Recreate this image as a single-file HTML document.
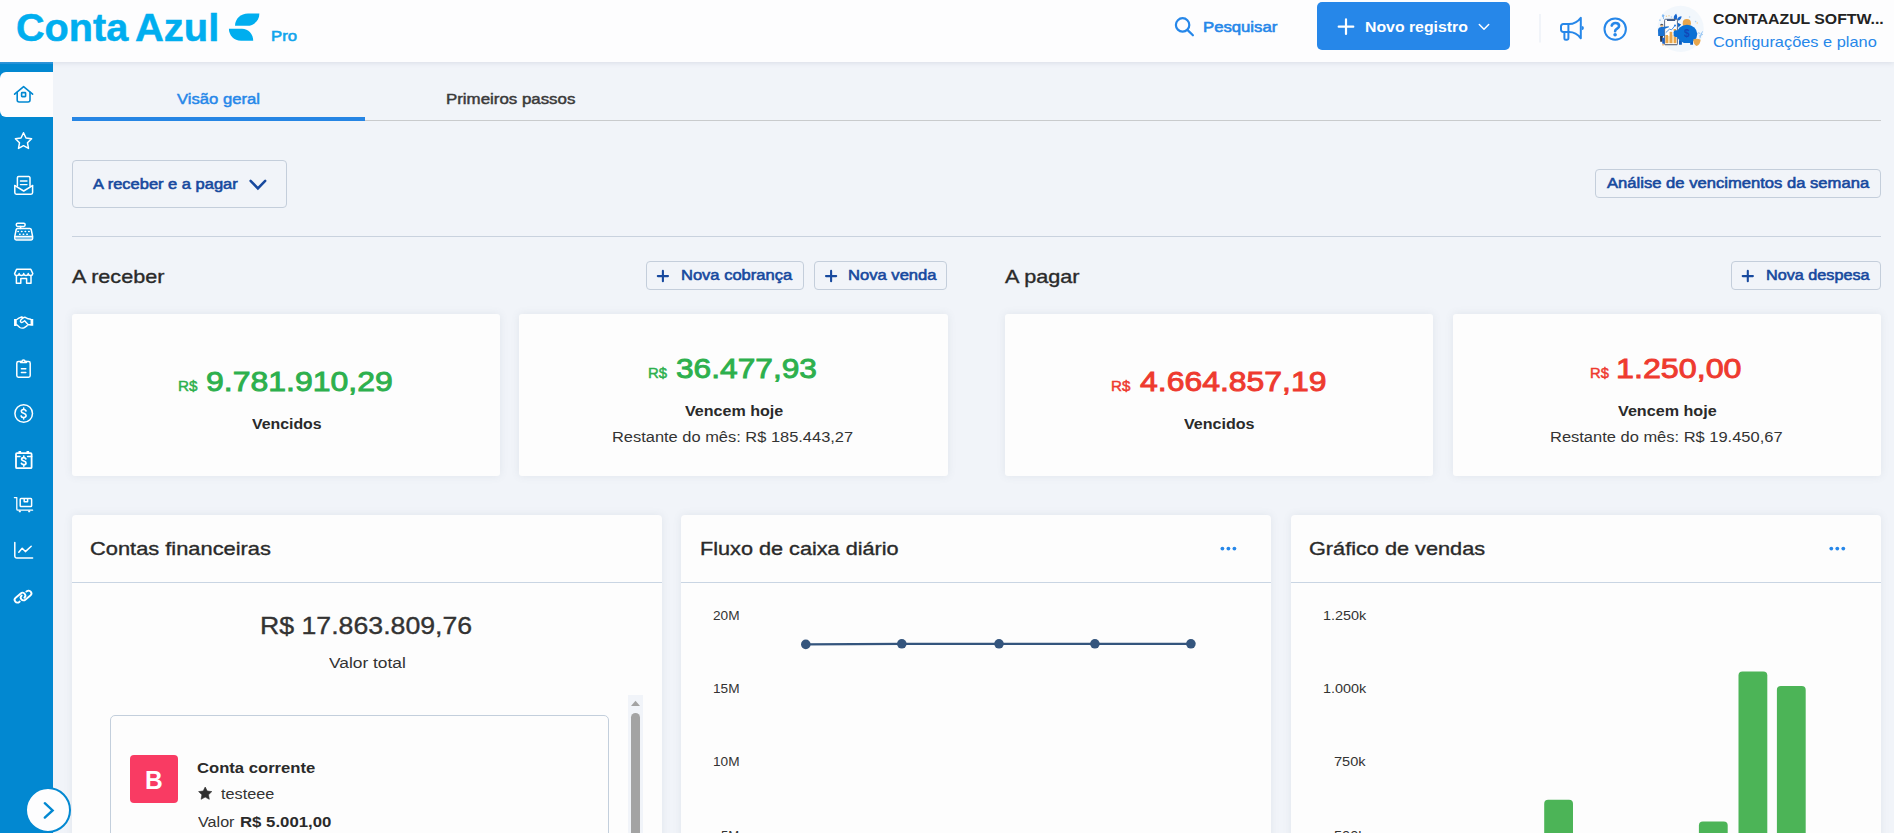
<!DOCTYPE html>
<html lang="pt-BR">
<head>
<meta charset="utf-8">
<title>Conta Azul Pro</title>
<style>
*{box-sizing:border-box;margin:0;padding:0}
html,body{width:1894px;height:833px;overflow:hidden}
body{font-family:"Liberation Sans",sans-serif;background:#f1f4f9;color:#2f2f2f;position:relative}
.t{position:absolute;white-space:nowrap;line-height:1;transform-origin:0 0}
svg{position:absolute;overflow:visible}
#hdr{position:absolute;left:0;top:0;width:1894px;height:62px;background:#fdfdfe;box-shadow:0 1px 5px rgba(60,80,110,.13);z-index:5}
#side{position:absolute;left:0;top:62px;width:53px;height:771px;background:linear-gradient(#2f94d9 0,#2a92d8 1.4px,#0288d1 2.4px);z-index:6}
#side .act{position:absolute;left:0;top:10px;width:53px;height:45px;background:#fdfdfe;border-radius:6px 0 0 6px}
#main{position:absolute;left:0;top:0;width:1894px;height:833px;z-index:1}
.bx{position:absolute}
.btn{position:absolute;border:1px solid #c4cedb;border-radius:4px}
.card{position:absolute;background:#fdfdfd;border-radius:3px;box-shadow:0 0 9px rgba(90,105,130,.11)}
.panel{position:absolute;background:#fdfdfd;border-radius:4px 4px 0 0;box-shadow:0 0 9px rgba(90,105,130,.11);top:515px;height:340px}
.panel i{position:absolute;left:0;right:0;top:67px;height:1px;background:#c9d5e3}
</style>
</head>
<body>
<div id="hdr">
<svg width="1894" height="62" viewBox="0 0 1894 62" style="left:0;top:0">
  <!-- logo mark -->
  <path d="M235,25.8 C235,19 240.8,13.6 248,13.6 L259.4,13.6 C259.4,20.6 254,25.8 247,25.8 Z" fill="#00aeef"/>
  <path d="M228.9,28.7 L242,28.7 C248.4,28.7 253.2,34 253.2,40.7 L241,40.7 C234,40.7 228.9,35.2 228.9,28.7 Z" fill="#00aeef"/>
  <!-- search icon -->
  <circle cx="1182.6" cy="24.9" r="6.7" fill="none" stroke="#2687e9" stroke-width="2.2"/>
  <path d="M1187.4,29.9 L1192.9,35.3" stroke="#2687e9" stroke-width="2.2" stroke-linecap="round"/>
  <!-- new button -->
  <rect x="1317" y="2" width="193" height="48" rx="5" fill="#2687e9"/>
  <path d="M1346,19.4 V34 M1338.7,26.7 H1353.3" stroke="#fff" stroke-width="2.2" stroke-linecap="round"/>
  <path d="M1479.3,24.5 L1484,29.2 L1488.7,24.5" fill="none" stroke="#fff" stroke-width="1.5" stroke-linecap="round" stroke-linejoin="round"/>
  <!-- divider -->
  <rect x="1539.5" y="14" width="1" height="28.5" fill="#e6ebf3"/>
  <!-- megaphone -->
  <g fill="none" stroke="#2687e9" stroke-width="2" stroke-linecap="round" stroke-linejoin="round">
    <path d="M1569,24.1 H1563.2 a2.2,2.2 0 0 0 -2.2,2.2 V29.7 a2.2,2.2 0 0 0 2.2,2.2 H1569"/>
    <path d="M1568.4,24.1 V31.9"/>
    <path d="M1569,24.1 C1574,24.1 1578,21.6 1580.8,17.9 V38.3 C1578,34.4 1574,31.9 1569,31.9"/>
    <path d="M1564.4,32.4 V38.2 a1.5,1.5 0 0 0 1.5,1.5 h1 a1.5,1.5 0 0 0 1.5,-1.5 V32.4"/>
  </g>
  <path d="M1581.8,26 a2.1,2.1 0 0 1 0,4.2 Z" fill="#2687e9"/>
  <!-- help -->
  <circle cx="1615.2" cy="29.1" r="10.7" fill="none" stroke="#2687e9" stroke-width="2"/>
  <path d="M1611.7,25.6 C1612.2,23.9 1613.7,23 1615.4,23 C1617.6,23 1619.1,24.3 1619.1,26.1 C1619.1,28.7 1615.1,28.7 1615.1,31.3" fill="none" stroke="#2687e9" stroke-width="2.6" stroke-linecap="round"/>
  <circle cx="1615.1" cy="34.8" r="1.8" fill="#2687e9"/>
  <!-- avatar -->
  <circle cx="1680.6" cy="28.9" r="23.2" fill="#f2f7fc"/>
  <g>
    <!-- speckles -->
    <g fill="#a9d0f5"><circle cx="1662.8" cy="15.4" r="1"/><circle cx="1660" cy="20.2" r="0.9"/><circle cx="1689.6" cy="17" r="0.8"/><circle cx="1695.6" cy="21.6" r="0.8"/><circle cx="1671.4" cy="17" r="0.8"/></g>
    <g fill="#f3cf8f"><circle cx="1666.4" cy="16.2" r="0.7"/><circle cx="1669" cy="15.8" r="0.7"/><circle cx="1697.2" cy="23" r="0.7"/></g>
    <path d="M1663,14.4 L1663.6,19 M1662,16.4 L1664.4,15.6" stroke="#5ea5ee" stroke-width="0.7" fill="none"/>
    <!-- leaves -->
    <path d="M1674.2,19.4 C1673,17 1674.6,14.6 1676.2,13.8 C1677.4,15.6 1677.4,17.6 1676.6,19.4 Z" fill="#1767d0"/>
    <path d="M1677,19.8 C1677.4,17.6 1679.4,16.2 1681.6,16.2 C1681.4,18.6 1680,20.2 1678,20.6 Z" fill="#1767d0"/>
    <!-- phone -->
    <rect x="1664.6" y="19.3" width="12.8" height="25.4" rx="0.9" fill="#fff" stroke="#465a7c" stroke-width="0.9"/>
    <rect x="1667" y="19.4" width="8.2" height="1.5" fill="#2f4a78"/>
    <rect x="1664.6" y="44.2" width="12.8" height="0.9" fill="#6b7280"/>
    <rect x="1668" y="35.9" width="1.6" height="7.3" fill="#f8dcaa"/>
    <rect x="1672.3" y="35" width="1.7" height="8.2" fill="#f8dcaa"/>
    <rect x="1665.4" y="35" width="2.6" height="8.2" fill="#e8a64c"/>
    <rect x="1669.6" y="31.8" width="2.7" height="11.4" fill="#e8a64c"/>
    <rect x="1674" y="36.6" width="2.4" height="6.6" fill="#e8a64c"/>
    <rect x="1673.6" y="29" width="2.5" height="2.1" fill="#e8a64c"/>
    <path d="M1665.8,32.6 L1669.4,29.2 L1671.6,29.8 L1674.8,25.8" fill="none" stroke="#2379de" stroke-width="0.8"/>
    <circle cx="1675" cy="25.6" r="1" fill="#2379de"/>
    <!-- person -->
    <path d="M1660,25.4 a1.7,1.7 0 0 1 3.4,0 Z" fill="#4a5568"/>
    <rect x="1660.6" y="25.2" width="2.2" height="1.5" fill="#e9a85c"/>
    <path d="M1658,30 C1658.2,27.6 1659.8,26.8 1661.6,26.9 L1668.8,26.2 L1668.9,27.3 L1664.2,28.9 L1664.6,35.9 L1658.2,35.9 Z" fill="#1a72d2"/>
    <path d="M1660,35.9 L1663,35.9 L1662,41.7 L1660.2,41.7 Z" fill="#2c3445"/>
    <path d="M1661.8,37.8 L1664.6,37.8 L1664.6,43.8 L1662.4,43.8 Z" fill="#1a5fc2"/>
    <rect x="1662.2" y="44.2" width="1.8" height="1.2" fill="#e9a85c"/>
    <!-- coin -->
    <circle cx="1686.8" cy="23.2" r="4.1" fill="#e8a64c"/>
    <!-- pig -->
    <rect x="1679" y="40" width="2.9" height="4.8" rx="0.5" fill="#0b5cc0"/>
    <rect x="1690.2" y="40" width="2.8" height="4.8" rx="0.5" fill="#0b5cc0"/>
    <ellipse cx="1687" cy="33.9" rx="10.3" ry="9.2" fill="#0a70d4"/>
    <rect x="1673.6" y="30.3" width="5" height="6.6" rx="2" fill="#0a70d4"/>
    <path d="M1677.6,22.8 L1681.2,24.6 L1678.4,27.4 Z" fill="#0a66cc"/>
    <!-- shield coin -->
    <path d="M1693.2,39.6 C1695.4,38.6 1698.4,38.6 1700.6,39.8 C1700.4,43.2 1698.8,45.4 1696.6,46 C1694.4,45.2 1693.2,42.8 1693.2,39.6 Z" fill="#e8a64c"/>
    <!-- plant / tail -->
    <path d="M1697.4,33.4 C1698.6,32.4 1699.8,33 1700.4,34 M1699.8,38.4 C1700.4,35.6 1701.4,33.4 1702.6,31.4 M1700.6,35.2 L1702.8,34.4 M1700.2,36.6 L1698.8,35.4" stroke="#7db7f0" stroke-width="0.8" fill="none"/>
  </g>
</svg>
<span class="t" style="left:1683.6px;top:28.2px;font-size:10.5px;font-weight:bold;color:#1247b8;transform:scaleX(0.95)">$</span>

<span class="t" style="left:15.97px;top:9px;font-size:38.5px;color:#00aeef;transform:scaleX(1.0294);font-weight:bold;-webkit-text-stroke:0.5px #00aeef;">Conta</span>
<span class="t" style="left:134.96px;top:9px;font-size:38.5px;color:#00aeef;transform:scaleX(1.0385);font-weight:bold;-webkit-text-stroke:0.5px #00aeef;">Azul</span>
<span class="t" style="left:271.12px;top:29px;font-size:14.2px;color:#12a4ec;transform:scaleX(1.1762);-webkit-text-stroke:0.55px #12a4ec;">Pro</span>
<span class="t" style="left:1202.81px;top:20px;font-size:14px;color:#2687e9;transform:scaleX(1.1934);-webkit-text-stroke:0.55px #2687e9;">Pesquisar</span>
<span class="t" style="left:1364.77px;top:20px;font-size:14px;color:#ffffff;transform:scaleX(1.1300);font-weight:bold;">Novo registro</span>
<span class="t" style="left:1712.75px;top:13px;font-size:13.8px;color:#222222;transform:scaleX(1.1463);font-weight:bold;">CONTAAZUL SOFTW...</span>
<span class="t" style="left:1712.76px;top:35px;font-size:14.4px;color:#2687e9;transform:scaleX(1.1371);">Configurações e plano</span>
</div>
<div id="side">
<div class="act"></div>
<svg width="53" height="833" viewBox="0 0 53 833" style="left:0;top:-62px">
 <!-- home (active) -->
 <g fill="none" stroke="#0288d1" stroke-width="1.6" stroke-linecap="round" stroke-linejoin="round">
  <path d="M14.6,94.2 L23.6,86.6 L32.6,94.2"/>
  <path d="M17.2,92.4 V100 a2,2 0 0 0 2,2 H28 a2,2 0 0 0 2,-2 V92.4"/>
  <rect x="21.6" y="92.6" width="4" height="4" rx="0.6"/>
 </g>
 <g fill="none" stroke="#fff" stroke-width="1.5" stroke-linecap="round" stroke-linejoin="round">
 <!-- star -->
  <path d="M23.5,132.8 L26,138 L31.6,138.8 L27.5,142.8 L28.5,148.4 L23.5,145.7 L18.5,148.4 L19.5,142.8 L15.4,138.8 L21,138 Z"/>
 <!-- mail -->
  <path d="M17.4,186 V177.8 a1.2,1.2 0 0 1 1.2,-1.2 H28.8 a1.2,1.2 0 0 1 1.2,1.2 V186"/>
  <path d="M20.4,181 H27 M20.4,184.6 H27" stroke-width="1.3"/>
  <path d="M14.8,185.4 V192.6 a1.6,1.6 0 0 0 1.6,1.6 H31 a1.6,1.6 0 0 0 1.6,-1.6 V185.4"/>
  <path d="M14.9,185.6 L23.7,191 L32.5,185.6"/>
 <!-- cash register -->
  <rect x="16.3" y="223.2" width="8.8" height="3.2" rx="1.3"/>
  <path d="M20.6,226.6 V228.6"/>
  <path d="M17.6,228.4 H29.8 a1.4,1.4 0 0 1 1.4,1.1 L32.6,236.4 V238.6 a1.4,1.4 0 0 1 -1.4,1.4 H16.2 a1.4,1.4 0 0 1 -1.4,-1.4 V236.4 L16.2,229.5 a1.4,1.4 0 0 1 1.4,-1.1 Z"/>
  <rect x="15.4" y="237" width="16.6" height="2.6" fill="rgba(255,255,255,.45)" stroke="none"/>
  <path d="M15,236.6 H32.4"/>
  <path d="M17.9,231.5 h0.5 M21.5,231.5 h0.5 M25.1,231.5 h0.5 M28.7,231.5 h0.5 M19.6,234.3 h0.5 M23.2,234.3 h0.5 M26.8,234.3 h0.5" stroke-width="1.5"/>
 <!-- store -->
  <path d="M16.6,269.2 H30.8 L32.8,273.6 a2.3,2.3 0 0 1 -4.55,0 a2.3,2.3 0 0 1 -4.55,0 a2.3,2.3 0 0 1 -4.55,0 a2.3,2.3 0 0 1 -4.55,0 Z"/>
  <path d="M16.4,276 V283.2 H20.8 V278.6 H26.6 V283.2 H31 V276"/>
 <!-- handshake -->
  <path d="M15.4,318.9 V326 M31.9,318.9 V325.8" stroke-width="2.7" stroke-linecap="butt"/>
  <path d="M16.8,319.5 L18.8,318.2 L21.6,317 L22.8,317.5" stroke-width="1.4"/>
  <path d="M30.6,319.3 L28.2,318.8 L25.2,317.3 C23.6,317 22,318.4 20.7,320.2 C19.8,321.5 21,323 22.6,322.2 L24.6,320.8 L28.2,324.8 H30.6" stroke-width="1.4"/>
  <path d="M16.8,324.8 L19.8,327.5 C21.4,328.4 23.2,328.2 24.4,327.6 L27.2,325.6" stroke-width="1.4"/>
 <!-- clipboard -->
  <path d="M20.6,361.6 H18.4 a1.6,1.6 0 0 0 -1.6,1.6 V375.6 a1.6,1.6 0 0 0 1.6,1.6 H28.6 a1.6,1.6 0 0 0 1.6,-1.6 V363.2 a1.6,1.6 0 0 0 -1.6,-1.6 H26.4"/>
  <path d="M20.6,362.6 V361.4 H22 a1.5,1.5 0 0 1 3,0 H26.4 V362.6 Z"/>
  <path d="M21.4,368.8 H25.8 M21.4,372.6 H25.8"/>
 <!-- dollar circle -->
  <circle cx="23.7" cy="413.5" r="8.8"/>
  <path d="M26,410.9 C25.6,409.9 24.8,409.5 23.6,409.5 C22.2,409.5 21.3,410.2 21.3,411.3 C21.3,413.9 26.1,412.8 26.1,415.5 C26.1,416.7 25.1,417.5 23.6,417.5 C22.3,417.5 21.4,416.9 21.1,415.9 M23.7,408 V409.4 M23.7,417.6 V419" stroke-width="1.6"/>
 <!-- calendar $ -->
  <rect x="16" y="453.2" width="15.6" height="15" rx="1" stroke-width="1.8"/>
  <path d="M19.8,451 V453.2 M27.8,451 V453.2" stroke-width="2.6" stroke-linecap="butt"/>
  <path d="M16,456.4 H20 M27.6,456.4 H31.6"/>
  <path d="M25.9,458.8 C25.5,457.9 24.8,457.6 23.7,457.6 C22.4,457.6 21.6,458.2 21.6,459.2 C21.6,461.5 26,460.5 26,462.9 C26,464 25.1,464.7 23.7,464.7 C22.5,464.7 21.7,464.2 21.4,463.3 M23.8,456.2 V457.5 M23.8,464.8 V466.1" stroke-width="1.7"/>
 <!-- trolley -->
  <path d="M14.4,497.6 H16.8 V509 a1.2,1.2 0 0 0 1.2,1.2 H32.6" stroke-width="1.3"/>
  <rect x="20.2" y="498.6" width="11.4" height="8" rx="0.8"/>
  <path d="M24.2,498.8 V501.8 H27.6 V498.8"/>
  <path d="M19.6,511.4 h0.4 M29,511.4 h0.4" stroke-width="1.8"/>
 <!-- chart -->
  <path d="M14.8,542.4 V556 a2,2 0 0 0 2,2 H32.6"/>
  <path d="M18.8,552.2 L22.2,548.2 L25.4,551.6 L31.2,546.2"/>
 <!-- link -->
  <path d="M3.3,2.8 A2.8,2.8 0 0 0 3.3,-2.8 L-3.3,-2.8 A2.8,2.8 0 0 0 -3.3,2.8 L-2.7,2.8" transform="translate(20,597.7) rotate(-40)" stroke-width="1.85"/>
  <path d="M-3.3,-2.8 A2.8,2.8 0 0 0 -3.3,2.8 L3.3,2.8 A2.8,2.8 0 0 0 3.3,-2.8 L2.7,-2.8" transform="translate(26.05,595.5) rotate(-40)" stroke-width="1.85"/>
 </g>
</svg>

</div>
<div id="main">
<!-- tabs -->
<div class="bx" style="left:72px;top:120px;width:1809px;height:1px;background:#c9cbcd"></div>
<div class="bx" style="left:72px;top:117px;width:293px;height:4px;background:#2685e4"></div>
<!-- dropdown -->
<div class="btn" style="left:72px;top:160px;width:215px;height:48px"></div>
<!-- analise -->
<div class="btn" style="left:1595px;top:169px;width:286px;height:29px"></div>
<!-- hr -->
<div class="bx" style="left:72px;top:236px;width:1809px;height:1px;background:#c9d2de"></div>
<!-- action buttons -->
<div class="btn" style="left:646px;top:261px;width:158px;height:29px"></div>
<div class="btn" style="left:814px;top:261px;width:133px;height:29px"></div>
<div class="btn" style="left:1731px;top:261px;width:150px;height:29px"></div>
<!-- cards -->
<div class="card" style="left:72px;top:314px;width:428px;height:162px"></div>
<div class="card" style="left:519px;top:314px;width:429px;height:162px"></div>
<div class="card" style="left:1005px;top:314px;width:428px;height:162px"></div>
<div class="card" style="left:1453px;top:314px;width:428px;height:162px"></div>
<!-- panels -->
<div class="panel" style="left:72px;width:590px"><i></i></div>
<div class="panel" style="left:681px;width:590px"><i></i></div>
<div class="panel" style="left:1291px;width:590px"><i></i></div>
<!-- inner account card -->
<div class="bx" style="left:110px;top:715px;width:499px;height:140px;border:1px solid #c3cfdc;border-radius:5px"></div>
<div class="bx" style="left:130px;top:755px;width:48px;height:48px;background:#f93b63;border-radius:4px"></div>
<!-- scrollbar -->
<div class="bx" style="left:628px;top:695px;width:15px;height:140px;background:#f1f4f9"></div>
<div class="bx" style="left:631px;top:713px;width:9px;height:130px;background:#a3a3a3;border-radius:5px"></div>
<svg width="1894" height="833" viewBox="0 0 1894 833" style="left:0;top:0">
  <!-- scrollbar arrow -->
  <path d="M631,706 L635.5,700.8 L640,706 Z" fill="#a3a3a3"/>
  <!-- chevron dropdown -->
  <path d="M250.6,180.8 L257.9,188.4 L265.2,180.8" fill="none" stroke="#17499e" stroke-width="2.5" stroke-linecap="round" stroke-linejoin="miter"/>
  <!-- plus icons -->
  <g stroke="#17499e" stroke-width="2.1" stroke-linecap="round">
    <path d="M662.9,270.9 V281.3 M657.8,276.1 H668"/>
    <path d="M831.1,270.9 V281.3 M826,276.1 H836.2"/>
    <path d="M1747.8,270.9 V281.3 M1742.7,276.1 H1752.9"/>
  </g>
  <!-- star small -->
  <path d="M205.2,787 L207.2,791 L211.8,791.6 L208.5,794.8 L209.3,799.3 L205.2,797.1 L201.1,799.3 L201.9,794.8 L198.6,791.6 L203.2,791 Z" fill="#2f2f2f" stroke="#2f2f2f" stroke-width="0.6" stroke-linejoin="round"/>
  <!-- more dots -->
  <g fill="#2687e9">
    <circle cx="1222.4" cy="548.6" r="1.9"/><circle cx="1228.4" cy="548.6" r="1.9"/><circle cx="1234.4" cy="548.6" r="1.9"/>
    <circle cx="1831.3" cy="548.6" r="1.9"/><circle cx="1837.3" cy="548.6" r="1.9"/><circle cx="1843.3" cy="548.6" r="1.9"/>
  </g>
  <!-- line chart -->
  <path d="M805.8,644.4 L901.8,643.8 L999,643.8 L1094.9,643.8 L1190.9,643.8" fill="none" stroke="#34557d" stroke-width="2.2"/>
  <g fill="#34557d">
    <circle cx="805.8" cy="644.4" r="4.8"/><circle cx="901.8" cy="643.8" r="4.8"/><circle cx="999" cy="643.8" r="4.8"/><circle cx="1094.9" cy="643.8" r="4.8"/><circle cx="1190.9" cy="643.8" r="4.8"/>
  </g>
  <!-- bars -->
  <g fill="#4cb457">
    <path d="M1544.2,840 V803.8 a4,4 0 0 1 4,-4 H1569 a4,4 0 0 1 4,4 V840 Z"/>
    <path d="M1698.9,840 V825.4 a4,4 0 0 1 4,-4 H1723.7 a4,4 0 0 1 4,4 V840 Z"/>
    <path d="M1738.5,840 V675.5 a4,4 0 0 1 4,-4 H1763.3 a4,4 0 0 1 4,4 V840 Z"/>
    <path d="M1776.9,840 V689.9 a4,4 0 0 1 4,-4 H1801.7 a4,4 0 0 1 4,4 V840 Z"/>
  </g>
</svg>

<span class="t" style="left:177.30px;top:92px;font-size:14px;color:#2687e9;transform:scaleX(1.1899);-webkit-text-stroke:0.45px #2687e9;">Visão geral</span>
<span class="t" style="left:445.80px;top:92px;font-size:14px;color:#3a3a3a;transform:scaleX(1.2047);-webkit-text-stroke:0.45px #3a3a3a;">Primeiros passos</span>
<span class="t" style="left:92.60px;top:177px;font-size:14px;color:#17499e;transform:scaleX(1.1772);-webkit-text-stroke:0.55px #17499e;">A receber e a pagar</span>
<span class="t" style="left:1606.50px;top:176px;font-size:14px;color:#17499e;transform:scaleX(1.1860);-webkit-text-stroke:0.55px #17499e;">Análise de vencimentos da semana</span>
<span class="t" style="left:72.40px;top:268px;font-size:18.5px;color:#2a2a2a;transform:scaleX(1.1658);-webkit-text-stroke:0.35px #2a2a2a;">A receber</span>
<span class="t" style="left:1005.20px;top:268px;font-size:18.5px;color:#2a2a2a;transform:scaleX(1.1687);-webkit-text-stroke:0.35px #2a2a2a;">A pagar</span>
<span class="t" style="left:680.92px;top:268px;font-size:14px;color:#17499e;transform:scaleX(1.1798);-webkit-text-stroke:0.55px #17499e;">Nova cobrança</span>
<span class="t" style="left:848.11px;top:268px;font-size:14px;color:#17499e;transform:scaleX(1.1851);-webkit-text-stroke:0.55px #17499e;">Nova venda</span>
<span class="t" style="left:1766.04px;top:268px;font-size:14px;color:#17499e;transform:scaleX(1.1573);-webkit-text-stroke:0.55px #17499e;">Nova despesa</span>
<span class="t" style="left:178.11px;top:379px;font-size:14px;color:#2db04d;transform:scaleX(1.0882);-webkit-text-stroke:0.45px #2db04d;">R$</span>
<span class="t" style="left:205.64px;top:368px;font-size:27.5px;color:#2db04d;transform:scaleX(1.1629);-webkit-text-stroke:0.9px #2db04d;">9.781.910,29</span>
<span class="t" style="left:251.50px;top:417px;font-size:14px;color:#2a2a2a;transform:scaleX(1.1328);font-weight:bold;">Vencidos</span>
<span class="t" style="left:648.24px;top:366px;font-size:14px;color:#2db04d;transform:scaleX(1.0647);-webkit-text-stroke:0.45px #2db04d;">R$</span>
<span class="t" style="left:675.95px;top:355px;font-size:27.5px;color:#2db04d;transform:scaleX(1.1521);-webkit-text-stroke:0.9px #2db04d;">36.477,93</span>
<span class="t" style="left:684.70px;top:404px;font-size:14px;color:#2a2a2a;transform:scaleX(1.1482);font-weight:bold;">Vencem hoje</span>
<span class="t" style="left:612.23px;top:430px;font-size:14px;color:#333333;transform:scaleX(1.1735);">Restante do mês: R$ 185.443,27</span>
<span class="t" style="left:1111.12px;top:379px;font-size:14px;color:#ee3a2f;transform:scaleX(1.0824);-webkit-text-stroke:0.45px #ee3a2f;">R$</span>
<span class="t" style="left:1139.70px;top:368px;font-size:27.5px;color:#ee3a2f;transform:scaleX(1.1612);-webkit-text-stroke:0.9px #ee3a2f;">4.664.857,19</span>
<span class="t" style="left:1184.00px;top:417px;font-size:14px;color:#2a2a2a;transform:scaleX(1.1475);font-weight:bold;">Vencidos</span>
<span class="t" style="left:1590.35px;top:366px;font-size:14px;color:#ee3a2f;transform:scaleX(1.0529);-webkit-text-stroke:0.45px #ee3a2f;">R$</span>
<span class="t" style="left:1616.06px;top:355px;font-size:27.5px;color:#ee3a2f;transform:scaleX(1.1724);-webkit-text-stroke:0.9px #ee3a2f;">1.250,00</span>
<span class="t" style="left:1618.00px;top:404px;font-size:14px;color:#2a2a2a;transform:scaleX(1.1529);font-weight:bold;">Vencem hoje</span>
<span class="t" style="left:1550.22px;top:430px;font-size:14px;color:#333333;transform:scaleX(1.1765);">Restante do mês: R$ 19.450,67</span>
<span class="t" style="left:90.42px;top:540px;font-size:18.5px;color:#2a2a2a;transform:scaleX(1.1809);-webkit-text-stroke:0.35px #2a2a2a;">Contas financeiras</span>
<span class="t" style="left:700.03px;top:540px;font-size:18.5px;color:#2a2a2a;transform:scaleX(1.1708);-webkit-text-stroke:0.35px #2a2a2a;">Fluxo de caixa diário</span>
<span class="t" style="left:1308.83px;top:540px;font-size:18.5px;color:#2a2a2a;transform:scaleX(1.1725);-webkit-text-stroke:0.35px #2a2a2a;">Gráfico de vendas</span>
<span class="t" style="left:260.08px;top:614px;font-size:24px;color:#333333;transform:scaleX(1.1117);-webkit-text-stroke:0.35px #333333;">R$ 17.863.809,76</span>
<span class="t" style="left:329.20px;top:656px;font-size:14px;color:#333333;transform:scaleX(1.2393);">Valor total</span>
<span class="t" style="left:196.61px;top:761px;font-size:14px;color:#2a2a2a;transform:scaleX(1.1878);font-weight:bold;">Conta corrente</span>
<span class="t" style="left:221.20px;top:787px;font-size:14px;color:#333333;transform:scaleX(1.1587);">testeee</span>
<span class="t" style="left:197.80px;top:815px;font-size:14px;color:#333333;transform:scaleX(1.1531);">Valor</span>
<span class="t" style="left:239.50px;top:815px;font-size:14px;color:#2a2a2a;transform:scaleX(1.1973);font-weight:bold;">R$ 5.001,00</span>
<span class="t" style="left:144.81px;top:767px;font-size:26px;color:#ffffff;transform:scaleX(0.9438);font-weight:bold;">B</span>
<span class="t" style="left:712.91px;top:610px;font-size:12.5px;color:#333333;transform:scaleX(1.0913);">20M</span>
<span class="t" style="left:712.91px;top:683px;font-size:12.5px;color:#333333;transform:scaleX(1.0913);">15M</span>
<span class="t" style="left:712.91px;top:756px;font-size:12.5px;color:#333333;transform:scaleX(1.0913);">10M</span>
<span class="t" style="left:721.36px;top:830px;font-size:12.5px;color:#333333;transform:scaleX(1.0438);">5M</span>
<span class="t" style="left:1322.85px;top:610px;font-size:12.5px;color:#333333;transform:scaleX(1.1528);">1.250k</span>
<span class="t" style="left:1322.85px;top:683px;font-size:12.5px;color:#333333;transform:scaleX(1.1528);">1.000k</span>
<span class="t" style="left:1334.03px;top:756px;font-size:12.5px;color:#333333;transform:scaleX(1.1654);">750k</span>
<span class="t" style="left:1334.03px;top:830px;font-size:12.5px;color:#333333;transform:scaleX(1.1654);">500k</span>
</div>
<div style="position:absolute;left:25px;top:787px;width:46px;height:46px;border-radius:50%;background:#fdfdfe;border:2px solid #0288d1;z-index:6"></div>
<svg width="1894" height="833" viewBox="0 0 1894 833" style="left:0;top:0;z-index:7;pointer-events:none">
  <path d="M44.8,803.2 L52.6,810.4 L44.8,817.6" fill="none" stroke="#0288d1" stroke-width="2.4" stroke-linecap="round" stroke-linejoin="miter"/>
</svg>
</body>
</html>
